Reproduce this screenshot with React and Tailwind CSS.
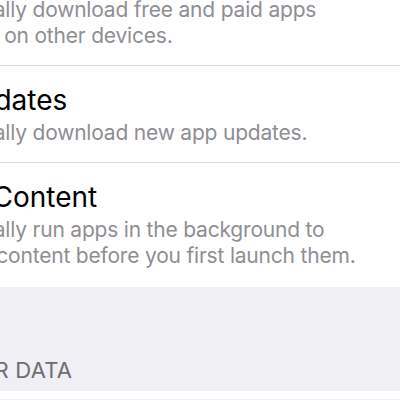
export default function App() {
  const cells = [
    {
      title: null,
      lines: ["Automatically download free and paid apps", "purchased on other devices."],
    },
    { title: "App Updates", lines: ["Automatically download new app updates."] },
    {
      title: "In-App Content",
      lines: ["Automatically run apps in the background to", "download content before you first launch them."],
    },
  ];

  return (
    <div className="w-[400px] h-[400px] overflow-hidden bg-[#efeff4] font-['Inter',sans-serif] antialiased">
      <div className="bg-white -mt-[3px]">
        {cells.map((cell, i) => (
          <div key={i} className={i > 0 ? "border-t border-[#d9d9dc]" : ""}>
            <div className={`-ml-[105px] ${i === 0 ? "pb-4" : i === 2 ? "pt-[18px] pb-[18px]" : "pt-[18px] pb-4"}`}>
              {cell.title && (
                <div className="text-[28px] leading-[32px] text-black whitespace-nowrap mb-1">{cell.title}</div>
              )}
              {cell.lines.map((line) => (
                <div key={line} className="text-[21px] leading-[26px] tracking-[-0.2px] text-[#8e8e93] whitespace-nowrap">
                  {line}
                </div>
              ))}
            </div>
          </div>
        ))}
      </div>
      <div className="pt-[70px] pb-2">
        <div className="-ml-[105px] text-[22px] leading-[26px] tracking-[0.2px] text-[#6d6d72] whitespace-nowrap">CELLULAR DATA</div>
      </div>
      <div className="bg-white h-2" />
    </div>
  );
}
